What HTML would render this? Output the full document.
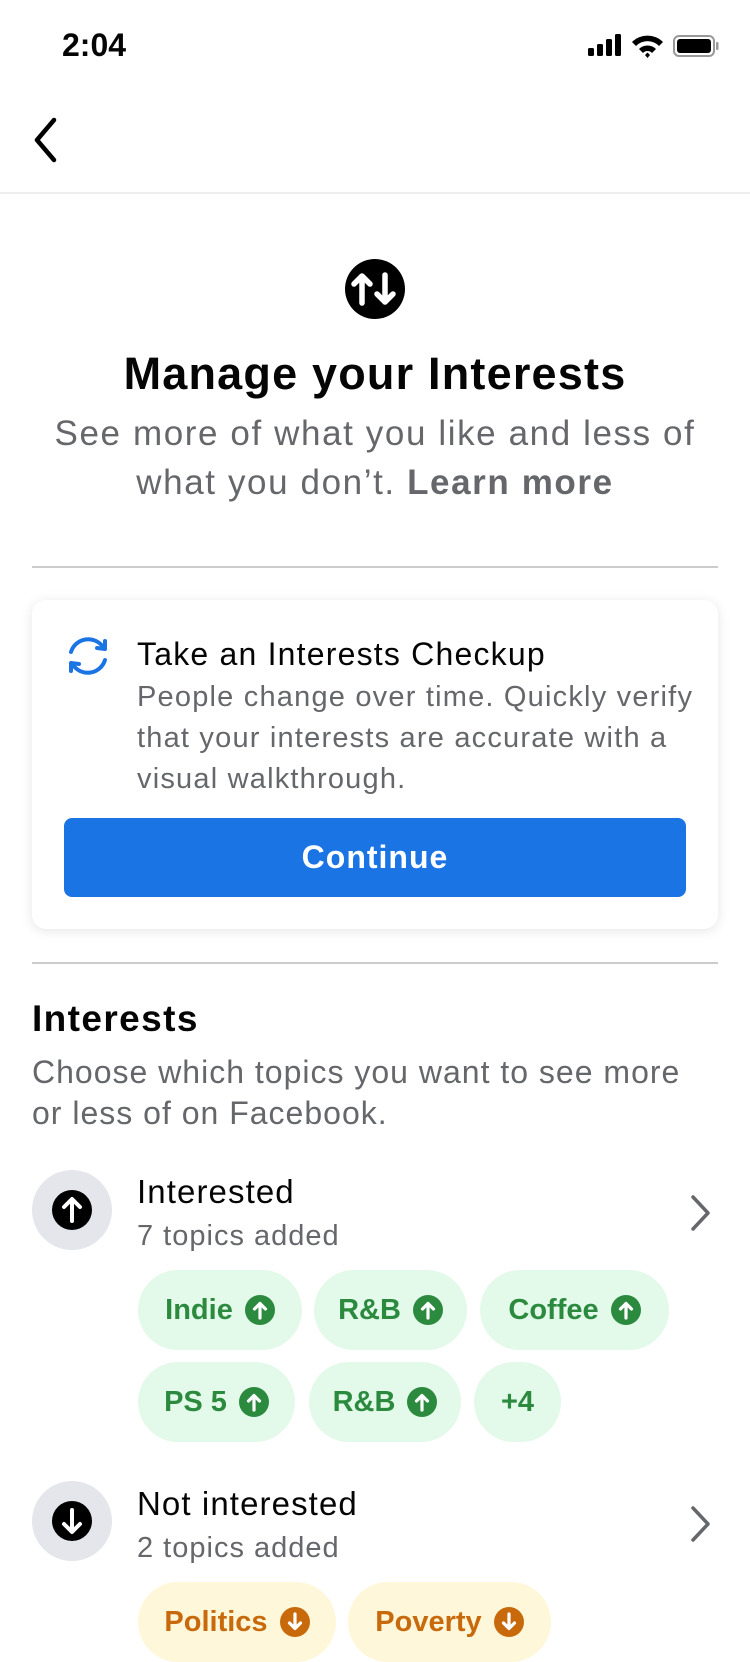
<!DOCTYPE html>
<html><head><meta charset="utf-8"><style>
*{margin:0;padding:0;box-sizing:border-box}
body{width:750px;height:1624px;background:#fff;font-family:"Liberation Sans",sans-serif;position:relative;overflow:hidden;color:#050505}
.a{position:absolute;white-space:nowrap}
.chip{position:absolute;height:80px;border-radius:40px;background:#e3faea;color:#2c8a3f;font-size:29px;font-weight:bold;display:flex;align-items:center;justify-content:center;gap:12px}
.chip.y{background:#fff7d9;color:#c86a0c}
.ci{width:30px;height:30px;border-radius:50%;background:#2c8a3f;display:inline-block;position:relative}
.y .ci{background:#c86a0c}
</style></head><body>
<div class="a" style="left:62px;top:27px;font-size:32px;font-weight:bold">2:04</div>
<svg class="a" style="left:585px;top:30px" width="140" height="32" viewBox="585 30 140 32">
<rect x="588" y="48" width="6" height="8" rx="1.5"/><rect x="597" y="44" width="6" height="12" rx="1.5"/><rect x="606" y="39" width="6" height="17" rx="1.5"/><rect x="615" y="34" width="6" height="22" rx="1.5"/>
<path d="M632 42 A22 22 0 0 1 663 42 L659 46 A16 16 0 0 0 636 46Z"/><path d="M639 49 A12 12 0 0 1 656 49 L652 53 A6 6 0 0 0 643 53Z"/><path d="M645 55 L647.5 52.5 L650 55 L647.5 58Z"/>
<rect x="674" y="36" width="40" height="20" rx="5" fill="none" stroke="#999" stroke-width="2"/><rect x="677" y="39" width="34" height="14" rx="3"/><rect x="716" y="42" width="2.5" height="8" rx="1" fill="#999"/>
</svg>
<svg class="a" style="left:28px;top:116px" width="40" height="50"><path d="M26 4 L9 24 L26 44" fill="none" stroke="#000" stroke-width="4.5" stroke-linecap="round" stroke-linejoin="round"/></svg>
<div class="a" style="left:0;top:192px;width:750px;height:2px;background:#eee"></div>
<svg class="a" style="left:345px;top:259px" width="60" height="60" viewBox="0 0 60 60"><circle cx="30" cy="30" r="30"/><path d="M17 44V18M9 25L17 17L25 25M40 16V42M32 35L40 43L48 35" fill="none" stroke="#fff" stroke-width="5.5" stroke-linecap="round" stroke-linejoin="round"/></svg>
<div class="a" style="left:0;width:750px;text-align:center;top:348px;font-size:45px;font-weight:bold;letter-spacing:1.2px">Manage your Interests</div>
<div class="a" style="left:0;width:750px;text-align:center;top:409px;font-size:35px;color:#65676b;line-height:49px;letter-spacing:1.6px">See more of what you like and less of<br>what you don’t. <b>Learn more</b></div>
<div class="a" style="left:32px;top:566px;width:686px;height:2px;background:#ccc"></div>
<div class="a" style="left:32px;top:600px;width:686px;height:329px;border-radius:14px;background:#fff;box-shadow:0 2px 12px rgba(0,0,0,.1)"></div>
<svg class="a" style="left:64px;top:632px" width="48" height="48" viewBox="0 0 48 48"><path d="M39 15 A18 18 0 0 0 7 20 M9 33 A18 18 0 0 0 41 28" fill="none" stroke="#1b74e4" stroke-width="4" stroke-linecap="round"/><path d="M33 16 L41 17 L41 9 M15 32 L7 31 L7 39" fill="none" stroke="#1b74e4" stroke-width="4" stroke-linecap="round" stroke-linejoin="round"/></svg>
<div class="a" style="left:137px;top:636px;font-size:32px;letter-spacing:1.2px">Take an Interests Checkup</div>
<div class="a" style="left:137px;top:677px;font-size:29px;color:#65676b;line-height:41px;letter-spacing:1.2px">People change over time. Quickly verify<br>that your interests are accurate with a<br>visual walkthrough.</div>
<div class="a" style="left:64px;top:818px;width:622px;height:79px;border-radius:8px;background:#1b74e4;color:#fff;font-size:32px;font-weight:bold;letter-spacing:1px;display:flex;align-items:center;justify-content:center">Continue</div>
<div class="a" style="left:32px;top:962px;width:686px;height:2px;background:#ccc"></div>
<div class="a" style="left:32px;top:998px;font-size:37px;font-weight:bold;letter-spacing:1.4px">Interests</div>
<div class="a" style="left:32px;top:1052px;font-size:32px;color:#65676b;line-height:41px;letter-spacing:1px">Choose which topics you want to see more<br>or less of on Facebook.</div>

<svg class="a" style="left:32px;top:1170px" width="80" height="80"><circle cx="40" cy="40" r="40" fill="#e4e6eb"/><circle cx="40" cy="40" r="20"/><path d="M40 51V30M32 37L40 29L48 37" fill="none" stroke="#fff" stroke-width="4" stroke-linecap="round" stroke-linejoin="round"/></svg>
<div class="a" style="left:137px;top:1173px;font-size:33px;letter-spacing:1.1px">Interested</div>
<div class="a" style="left:137px;top:1220px;font-size:29px;color:#65676b;letter-spacing:1px">7 topics added</div>
<svg class="a" style="left:688px;top:1194px" width="26" height="38"><path d="M5 3L20 19L5 35" fill="none" stroke="#65676b" stroke-width="3.5" stroke-linecap="round" stroke-linejoin="round"/></svg>

<svg width="0" height="0" style="position:absolute"><defs><symbol id="up" viewBox="0 0 30 30"><path d="M15 23V9M9.5 14L15 8.5L20.5 14" fill="none" stroke="#fff" stroke-width="3.2" stroke-linecap="round" stroke-linejoin="round"/></symbol><symbol id="dn" viewBox="0 0 30 30"><path d="M15 7V21M9.5 16L15 21.5L20.5 16" fill="none" stroke="#fff" stroke-width="3.2" stroke-linecap="round" stroke-linejoin="round"/></symbol></defs></svg>

<div class="chip" style="left:138px;top:1270px;width:164px">Indie <span class="ci"><svg width="30" height="30"><use href="#up"/></svg></span></div>
<div class="chip" style="left:314px;top:1270px;width:153px">R&amp;B <span class="ci"><svg width="30" height="30"><use href="#up"/></svg></span></div>
<div class="chip" style="left:480px;top:1270px;width:189px">Coffee <span class="ci"><svg width="30" height="30"><use href="#up"/></svg></span></div>
<div class="chip" style="left:138px;top:1362px;width:157px">PS 5 <span class="ci"><svg width="30" height="30"><use href="#up"/></svg></span></div>
<div class="chip" style="left:309px;top:1362px;width:152px">R&amp;B <span class="ci"><svg width="30" height="30"><use href="#up"/></svg></span></div>
<div class="chip" style="left:474px;top:1362px;width:87px">+4</div>

<svg class="a" style="left:32px;top:1481px" width="80" height="80"><circle cx="40" cy="40" r="40" fill="#e4e6eb"/><circle cx="40" cy="40" r="20"/><path d="M40 29V50M32 43L40 51L48 43" fill="none" stroke="#fff" stroke-width="4" stroke-linecap="round" stroke-linejoin="round"/></svg>
<div class="a" style="left:137px;top:1485px;font-size:33px;letter-spacing:1.1px">Not interested</div>
<div class="a" style="left:137px;top:1532px;font-size:29px;color:#65676b;letter-spacing:1px">2 topics added</div>
<svg class="a" style="left:688px;top:1505px" width="26" height="38"><path d="M5 3L20 19L5 35" fill="none" stroke="#65676b" stroke-width="3.5" stroke-linecap="round" stroke-linejoin="round"/></svg>
<div class="chip y" style="left:138px;top:1582px;width:198px">Politics <span class="ci"><svg width="30" height="30"><use href="#dn"/></svg></span></div>
<div class="chip y" style="left:348px;top:1582px;width:203px">Poverty <span class="ci"><svg width="30" height="30"><use href="#dn"/></svg></span></div>
</body></html>
